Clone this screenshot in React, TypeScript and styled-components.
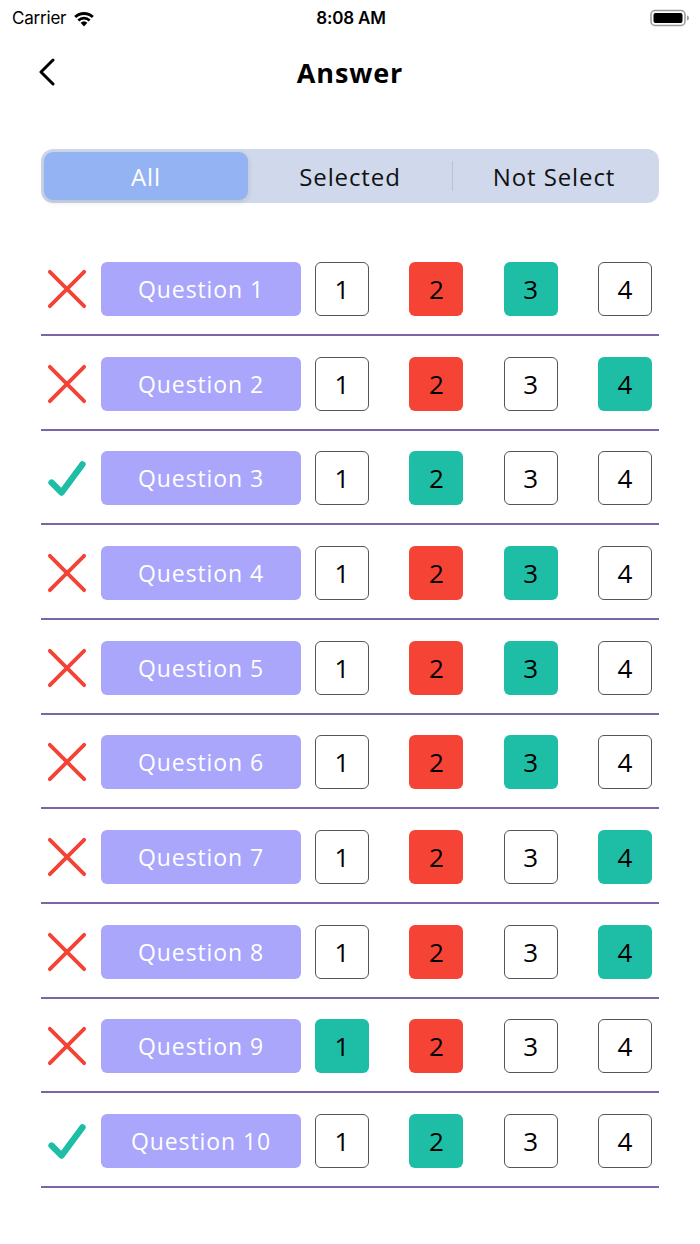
import React from "react";
import styled, { createGlobalStyle } from "styled-components";

const Global = createGlobalStyle`
  html, body { margin: 0; padding: 0; background: #ffffff; }
  body { font-family: "Open Sans", "Liberation Sans", sans-serif; -webkit-font-smoothing: antialiased; }
  * { box-sizing: border-box; }
`;

const Page = styled.div`
  width: 700px;
  min-height: 1244px;
  background: #fff;
  display: flex;
  flex-direction: column;
`;

const StatusBar = styled.div`
  height: 36px;
  display: grid;
  grid-template-columns: 1fr auto 1fr;
  align-items: center;
  padding: 0 10px 0 12px;
  font-family: "Inter", "Liberation Sans", sans-serif;
  font-size: 17px;
  color: #000;
`;

const Carrier = styled.div`
  display: flex;
  align-items: center;
  gap: 6px;
  letter-spacing: -0.2px;
`;

const Time = styled.div`
  font-weight: 600;
  letter-spacing: -0.2px;
`;

const Battery = styled.div`
  justify-self: end;
  display: flex;
  align-items: center;
`;

const NavBar = styled.div`
  height: 72px;
  display: grid;
  grid-template-columns: 80px 1fr 80px;
  align-items: center;
`;

const BackButton = styled.button`
  border: none;
  background: none;
  padding: 0 0 0 38px;
  display: flex;
  align-items: center;
  cursor: pointer;
`;

const Title = styled.h1`
  margin: 0;
  text-align: center;
  font-size: 27px;
  font-weight: 700;
  color: #000;
  letter-spacing: 0.9px;
`;

const Segment = styled.div`
  margin: 41px 41px 0;
  height: 54px;
  background: #cfd9eb;
  border-radius: 12px;
  padding: 3px;
  display: flex;
  align-items: center;
`;

const SegItem = styled.div<{ $active?: boolean; $divider?: boolean }>`
  flex: 1;
  height: 100%;
  display: flex;
  align-items: center;
  justify-content: center;
  font-size: 24px;
  letter-spacing: 0.9px;
  color: ${(p) => (p.$active ? "#fff" : "#111")};
  background: ${(p) => (p.$active ? "#94b3f3" : "transparent")};
  border-radius: 9px;
  box-shadow: ${(p) => (p.$active ? "0 2px 6px rgba(0,0,0,0.12)" : "none")};
  position: relative;
  &::before {
    content: "";
    display: ${(p) => (p.$divider ? "block" : "none")};
    position: absolute;
    left: 0;
    top: 9px;
    bottom: 9px;
    width: 1px;
    background: #b7c1d4;
  }
`;

const List = styled.div`
  margin: 38.33px 41px 0;
  display: flex;
  flex-direction: column;
`;

const Row = styled.div`
  display: flex;
  align-items: center;
  padding: 20.67px 0 18px 6px;
  border-bottom: 2px solid #7a66a4;
`;

const StatusIcon = styled.div`
  width: 40px;
  height: 54px;
  display: flex;
  align-items: center;
  justify-content: center;
`;

const QuestionLabel = styled.div`
  margin-left: 14px;
  width: 200px;
  height: 54px;
  border-radius: 6px;
  background: #a9a6fb;
  color: #fff;
  font-size: 23px;
  display: flex;
  align-items: center;
  justify-content: center;
  letter-spacing: 0.9px;
`;

const Options = styled.div`
  margin-left: 14px;
  width: 337px;
  display: flex;
  justify-content: space-between;
`;

type OptState = "none" | "wrong" | "right";

const Option = styled.div<{ $state: OptState }>`
  width: 54px;
  height: 54px;
  border-radius: 6px;
  display: flex;
  align-items: center;
  justify-content: center;
  font-size: 26px;
  color: #000;
  background: ${(p) =>
    p.$state === "wrong" ? "#f54336" : p.$state === "right" ? "#1dbea5" : "#fff"};
  border: ${(p) => (p.$state === "none" ? "1px solid #555" : "none")};
`;

const Cross = () => (
  <svg width="42" height="42" viewBox="0 0 42 42">
    <path d="M3 3 L39 39 M39 3 L3 39" stroke="#f44336" strokeWidth="4" strokeLinecap="round" />
  </svg>
);

const Tick = () => (
  <svg width="44" height="44" viewBox="0 0 44 44">
    <path d="M5 27 L16 38 L39 7" stroke="#1dbea5" strokeWidth="7" strokeLinecap="round" strokeLinejoin="round" fill="none" />
  </svg>
);

type Q = { ok: boolean; wrong?: number; right: number };

const data: Q[] = [
  { ok: false, wrong: 2, right: 3 },
  { ok: false, wrong: 2, right: 4 },
  { ok: true, right: 2 },
  { ok: false, wrong: 2, right: 3 },
  { ok: false, wrong: 2, right: 3 },
  { ok: false, wrong: 2, right: 3 },
  { ok: false, wrong: 2, right: 4 },
  { ok: false, wrong: 2, right: 4 },
  { ok: false, wrong: 2, right: 1 },
  { ok: true, right: 2 },
];

export default function App() {
  return (
    <Page>
      <Global />
      <StatusBar>
        <Carrier>
          Carrier
          <svg width="24" height="18" viewBox="0 0 24 18">
            <path d="M12 17.5 L8.6 13.8 A5 5 0 0 1 15.4 13.8 Z" fill="#000" />
            <path d="M5.4 10.4 A9.5 9.5 0 0 1 18.6 10.4 L16.7 12.5 A6.8 6.8 0 0 0 7.3 12.5 Z" fill="#000" />
            <path d="M2.2 7 A14 14 0 0 1 21.8 7 L19.9 9.1 A11.3 11.3 0 0 0 4.1 9.1 Z" fill="#000" />
          </svg>
        </Carrier>
        <Time>8:08 AM</Time>
        <Battery>
          <svg width="40" height="18" viewBox="0 0 40 18">
            <rect x="1" y="1.5" width="34" height="15" rx="4" fill="none" stroke="#999" strokeWidth="1.5" />
            <rect x="3.5" y="4" width="29" height="10" rx="2" fill="#000" />
            <path d="M37 6.5 Q39 7 39 9 Q39 11 37 11.5 Z" fill="#999" />
          </svg>
        </Battery>
      </StatusBar>
      <NavBar>
        <BackButton aria-label="Back">
          <svg width="18" height="28" viewBox="0 0 18 28">
            <path d="M15 2 L3 14 L15 26" stroke="#000" strokeWidth="3" fill="none" strokeLinecap="round" strokeLinejoin="round" />
          </svg>
        </BackButton>
        <Title>Answer</Title>
        <div />
      </NavBar>
      <Segment>
        <SegItem $active>All</SegItem>
        <SegItem>Selected</SegItem>
        <SegItem $divider>Not Select</SegItem>
      </Segment>
      <List>
        {data.map((q, i) => (
          <Row key={i}>
            <StatusIcon>{q.ok ? <Tick /> : <Cross />}</StatusIcon>
            <QuestionLabel>Question {i + 1}</QuestionLabel>
            <Options>
              {[1, 2, 3, 4].map((n) => (
                <Option
                  key={n}
                  $state={n === q.right ? "right" : n === q.wrong ? "wrong" : "none"}
                >
                  {n}
                </Option>
              ))}
            </Options>
          </Row>
        ))}
      </List>
    </Page>
  );
}
